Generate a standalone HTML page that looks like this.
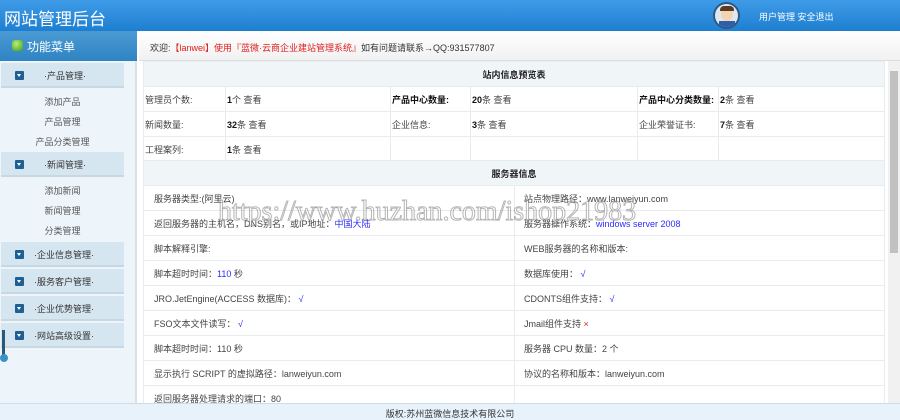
<!DOCTYPE html>
<html><head><meta charset="utf-8"><style>
*{margin:0;padding:0;box-sizing:border-box}
body{width:900px;height:420px;overflow:hidden;font-family:"Liberation Sans","Noto Sans CJK SC",sans-serif;font-size:9px;color:#333;background:#fff;position:relative}
.a{position:absolute}
#hd{left:0;top:0;width:900px;height:31px;background:linear-gradient(#3f9be8,#1e7fd0);}
#logo{left:4px;top:5px;font-size:17px;color:#fff;letter-spacing:0px}
#side{left:0;top:31px;width:137px;height:372px;background:#eef5fa;border-right:2px solid #d6e2ea}
#fm{left:0;top:31px;width:137px;height:30px;background:linear-gradient(#4a9ad4,#2f84c2);color:#fff;font-size:12px}
.grp{position:absolute;left:1px;width:123px;height:25px;background:#d6e6f0;border-bottom:2px solid #c8d8e2}
.grp i{position:absolute;left:14px;top:8px;width:9px;height:9px;background:#1e5f94;border-radius:1px}
.grp i:after{content:"";position:absolute;left:2px;top:3px;border:2.5px solid transparent;border-top:3px solid #fff}
.grp span{position:absolute;top:6px;font-size:9px}
.sub{position:absolute;width:125px;text-align:center;font-size:9px;color:#555}
#wel{left:139px;top:31px;width:761px;height:30px;background:linear-gradient(#fff,#f1f1f1);border-bottom:1px solid #ddd;padding:10px 0 0 11px;font-size:9px}
.r{color:#e02020}
table{position:absolute;border-collapse:collapse;font-size:9px}
td{border:1px solid #e6ecf0;height:25px;padding:0 1px;color:#444}
th{background:#f0f5f8;height:25px;font-size:9px;font-weight:bold;color:#222;border:1px solid #e6ecf0}
.b{font-weight:bold;color:#111}
.bl{color:#2a2aff}
#ft{left:0;top:403px;width:900px;height:17px;background:#e8f2fa;border-top:1px solid #d0dde8;text-align:center;font-size:9px;padding-top:3px}
#sb{left:888px;top:61px;width:12px;height:342px;background:#f1f1f1}
</style></head><body>
<div id="hd" class="a"></div>
<div id="logo" class="a">网站管理后台</div>
<div class="a" style="left:713px;top:2px;width:27px;height:27px;border-radius:50%;background:#dfe8f0;border:2px solid #2a5a88;overflow:hidden"><div style="position:absolute;left:6px;top:4px;width:12px;height:13px;border-radius:50%;background:#f3d4b0"></div><div style="position:absolute;left:5px;top:2px;width:14px;height:5px;background:#5a3a20;border-radius:4px 4px 0 0"></div><div style="position:absolute;left:4px;top:17px;width:16px;height:8px;background:#2e5ea8"></div></div>
<div class="a" style="left:759px;top:10px;color:#fff;font-size:9px">用户管理 安全退出</div>
<div id="side" class="a"></div>
<div id="fm" class="a"><div class="a" style="left:12px;top:9px;width:11px;height:11px;border-radius:3px;background:radial-gradient(circle at 40% 35%,#b8f070,#3a9a20)"></div><div class="a" style="left:27px;top:7px">功能菜单</div></div>
<div class="grp" style="top:63px"><i></i><span style="left:43px">·产品管理·</span></div>
<div class="sub" style="top:95px">添加产品</div>
<div class="sub" style="top:115px">产品管理</div>
<div class="sub" style="top:135px">产品分类管理</div>
<div class="grp" style="top:152px"><i></i><span style="left:43px">·新闻管理·</span></div>
<div class="sub" style="top:184px">添加新闻</div>
<div class="sub" style="top:204px">新闻管理</div>
<div class="sub" style="top:224px">分类管理</div>
<div class="grp" style="top:242px"><i></i><span style="left:33px">·企业信息管理·</span></div>
<div class="grp" style="top:269px"><i></i><span style="left:33px">·服务客户管理·</span></div>
<div class="grp" style="top:296px"><i></i><span style="left:33px">·企业优势管理·</span></div>
<div class="grp" style="top:323px"><i></i><span style="left:33px">·网站高级设置·</span></div>
<div class="a" style="left:2px;top:330px;width:3px;height:25px;background:#2a5a7a"></div>
<div class="a" style="left:0;top:354px;width:8px;height:8px;border-radius:50%;background:#3a90c8"></div>
<div id="wel" class="a">欢迎:<span class="r">【lanwei】使用『蓝微·云商企业建站管理系统』</span>如有问题请联系→QQ:931577807</div>
<table style="left:143px;top:61px;width:742px">
<tr><th colspan="6">站内信息预览表</th></tr>
<tr><td style="width:82px">管理员个数:</td><td style="width:165px"><span class="b">1</span>个 查看</td><td style="width:80px" class="b">产品中心数量:</td><td style="width:167px"><span class="b">20</span>条 查看</td><td style="width:81px" class="b">产品中心分类数量:</td><td><span class="b">2</span>条 查看</td></tr>
<tr><td>新闻数量:</td><td><span class="b">32</span>条 查看</td><td>企业信息:</td><td><span class="b">3</span>条 查看</td><td>企业荣誉证书:</td><td><span class="b">7</span>条 查看</td></tr>
<tr><td>工程案列:</td><td><span class="b">1</span>条 查看</td><td></td><td></td><td></td><td></td></tr>
</table>
<table style="left:143px;top:160px;width:742px">
<tr><th colspan="2">服务器信息</th></tr>
<tr><td style="width:371px;padding-left:10px">服务器类型:(阿里云)</td><td style="padding-left:9px">站点物理路径：www.lanweiyun.com</td></tr>
<tr><td style="padding-left:10px">返回服务器的主机名，DNS别名，或IP地址：<span class="bl">中国大陆</span></td><td style="padding-left:9px">服务器操作系统：<span class="bl">windows server 2008</span></td></tr>
<tr><td style="padding-left:10px">脚本解释引擎:</td><td style="padding-left:9px">WEB服务器的名称和版本:</td></tr>
<tr><td style="padding-left:10px">脚本超时时间：<span class="bl">110</span> 秒</td><td style="padding-left:9px">数据库使用： <span class="bl">√</span></td></tr>
<tr><td style="padding-left:10px">JRO.JetEngine(ACCESS 数据库)： <span class="bl">√</span></td><td style="padding-left:9px">CDONTS组件支持： <span class="bl">√</span></td></tr>
<tr><td style="padding-left:10px">FSO文本文件读写： <span class="bl">√</span></td><td style="padding-left:9px">Jmail组件支持 <span class="r">×</span></td></tr>
<tr><td style="padding-left:10px">脚本超时时间：110 秒</td><td style="padding-left:9px">服务器 CPU 数量：2 个</td></tr>
<tr><td style="padding-left:10px">显示执行 SCRIPT 的虚拟路径：lanweiyun.com</td><td style="padding-left:9px">协议的名称和版本：lanweiyun.com</td></tr>
<tr><td style="padding-left:10px">返回服务器处理请求的端口：80</td><td></td></tr>
</table>
<div class="a" style="left:218px;top:196px;font-family:'Liberation Serif',serif;font-size:28px;color:rgba(255,255,255,0.3);-webkit-text-stroke:1px rgba(120,120,120,0.55);white-space:nowrap">https://www.huzhan.com/ishop21983</div>
<div id="sb" class="a"><div class="a" style="left:2px;top:10px;width:8px;height:182px;background:#c1c1c1"></div></div>
<div id="ft" class="a">版权:苏州蓝微信息技术有限公司</div>
</body></html>
